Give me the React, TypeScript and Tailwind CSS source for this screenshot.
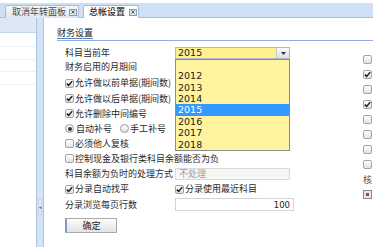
import React from "react";

const CB = ({ checked }: { checked?: boolean }) => (
  <span className="inline-flex w-[9px] h-[9px] shrink-0 items-center justify-center rounded-[2px] border border-[#a3a3a3] bg-linear-to-b from-white to-[#e2e2e2]">
    {checked && (
      <svg width="7" height="7" viewBox="0 0 7 7">
        <path d="M0.8 3.6 L2.7 5.4 L6.2 1.1" stroke="#1e1e1e" strokeWidth="1.5" fill="none" />
      </svg>
    )}
  </span>
);

const Radio = ({ checked }: { checked?: boolean }) => (
  <span className="inline-flex w-[9px] h-[9px] shrink-0 items-center justify-center rounded-full border border-[#9a9a9a] bg-linear-to-b from-white to-[#e2e2e2]">
    {checked && <span className="w-[4px] h-[4px] rounded-full bg-[#333]" />}
  </span>
);

const Close = () => (
  <span className="inline-flex w-[8px] h-[7px] shrink-0 items-center justify-center border border-[#8e9aab] bg-[#dfe5ee]">
    <svg width="4" height="4" viewBox="0 0 4 4" className="block">
      <path d="M0.5 0.5 L3.5 3.5 M3.5 0.5 L0.5 3.5" stroke="#4f5b6d" strokeWidth="1" />
    </svg>
  </span>
);

export default function App() {
  const years = ["", "2012", "2013", "2014", "2015", "2016", "2017", "2018"];
  return (
    <div className="relative w-[373px] h-[247px] overflow-hidden bg-white flex flex-col text-[#2a2a2a] text-[9px] leading-[12px] font-['DejaVu_Sans','Noto_Sans_CJK_SC',sans-serif]">
      {/* tab strip */}
      <div className="h-[18px] shrink-0 pt-[3px]">
        <div className="h-[15px] bg-[#cfdff4] border-b border-[#a6c1e6] flex items-end pl-[5px] gap-[4px]">
          <div className="h-[13px] -mb-px w-[74px] shrink-0 flex items-center gap-[3px] pl-[6px] whitespace-nowrap border border-[#aabbd3] border-b-0 rounded-t-[2px] bg-linear-to-b from-[#f4f7fb] to-[#dde6f2] text-[#4a4a4a] font-['Noto_Sans_CJK_SC',sans-serif]">
            <span>取消年转面板</span>
            <Close />
          </div>
          <div className="h-[13px] -mb-px w-[56px] shrink-0 flex items-center gap-[4px] pl-[5px] whitespace-nowrap border border-[#99bbe8] border-b-0 rounded-t-[2px] bg-white text-[#1a1a1a] font-['Noto_Sans_CJK_SC',sans-serif] font-medium">
            <span>总帐设置</span>
            <Close />
          </div>
        </div>
      </div>

      {/* body */}
      <div className="flex flex-1 min-h-0">
        {/* left panel */}
        <div className="w-[37px] shrink-0 border-r border-[#a9c3e6] flex flex-col">
          <div className="h-[15px] bg-[#dde8f6] border-b border-[#c3d5ec]" />
          <div className="h-[14px] border-b border-[#edf1f6]" />
          <div className="h-[13px] border-b border-[#edf1f6]" />
          <div className="h-[12px] border-b border-[#edf1f6]" />
          <div className="h-[13px] border-b border-[#f2f4f8]" />
        </div>
        {/* splitter */}
        <div className="w-[7px] shrink-0 bg-[#d4e3f5] border-r border-[#a9c3e6] flex flex-col items-center pt-[181px]">
          <div className="w-[4px] h-[16px] bg-[#e6edf5] border border-[#c2cfdf] flex items-center justify-center text-[5px] leading-[5px] text-[#666]">
            ◂
          </div>
        </div>

        {/* content */}
        <div className="flex-1 flex flex-col min-w-0 font-['Noto_Sans_CJK_SC',sans-serif]">
          <div className="ml-[13px] h-[23px] flex items-end pb-[1px] border-b border-[#8fb0e0] text-[#222]">
            <span className="border-b border-[#5c86c7] leading-[11px]">财务设置</span>
          </div>
          <div className="flex">
            {/* form column */}
            <div className="w-[319px] shrink-0 pl-[21px] pt-[6px] flex flex-col">
              <div className="h-[12px] flex items-center">
                <span className="w-[110px]">科目当前年</span>
                <div className="w-[115px] h-[12px] flex items-center border border-[#b5b8c8] bg-[#fff08f]">
                  <span className="flex-1 pl-[2px] font-['DejaVu_Sans',sans-serif] text-[9.5px] text-[#222]">2015</span>
                  <span className="w-[13px] h-full border-l border-[#c8c8c8] bg-linear-to-b from-[#fafafa] to-[#dedede] flex items-center justify-center">
                    <svg width="5" height="3" viewBox="0 0 5 3">
                      <path d="M0 0 H5 L2.5 3 Z" fill="#333" />
                    </svg>
                  </span>
                </div>
              </div>
              <div className="h-[16px] flex items-center">财务启用的月期间</div>
              <div className="h-[16px] flex items-center gap-[1px]">
                <CB checked />
                <span>允许做以前单据(期间数)</span>
              </div>
              <div className="h-[15px] flex items-center gap-[1px]">
                <CB checked />
                <span>允许做以后单据(期间数)</span>
              </div>
              <div className="h-[15px] flex items-center gap-[1px]">
                <CB checked />
                <span>允许删除中间编号</span>
              </div>
              <div className="h-[15px] flex items-center">
                <Radio checked />
                <span className="ml-[2px] w-[44px]">自动补号</span>
                <Radio />
                <span className="ml-[1px]">手工补号</span>
              </div>
              <div className="h-[15px] flex items-center gap-[1px]">
                <CB />
                <span>必须他人复核</span>
              </div>
              <div className="h-[15px] flex items-center gap-[1px]">
                <CB />
                <span>控制现金及银行类科目余额能否为负</span>
              </div>
              <div className="h-[16px] flex items-center">
                <span className="w-[110px]">科目余额为负时的处理方式</span>
                <div className="w-[115px] h-[12px] flex items-center pl-[3px] border border-[#dadada] bg-[#f6f6f6] text-[#a0a0a0]">
                  不处理
                </div>
              </div>
              <div className="h-[14px] flex items-center">
                <div className="w-[110px] flex items-center gap-[1px]">
                  <CB checked />
                  <span>分录自动找平</span>
                </div>
                <CB checked />
                <span className="ml-[1px]">分录使用最近科目</span>
              </div>
              <div className="h-[17px] flex items-center">
                <span className="w-[110px]">分录浏览每页行数</span>
                <div className="w-[119px] h-[13px] flex items-center justify-end pr-[3px] border border-[#d4d4d4] bg-white font-['DejaVu_Sans',sans-serif] text-[8.5px] text-[#222]">
                  100
                </div>
              </div>
              <div className="mt-[5px]">
                <button className="w-[52px] h-[15px] flex items-center justify-center border border-[#a9a9a9] border-l-[2px] border-l-[#7f9cc6] rounded-[1px] bg-linear-to-b from-[#fdfdfd] to-[#e3e3e3] text-[#222] text-[9px] leading-[12px]">
                  确定
                </button>
              </div>
            </div>
            {/* right column (partially visible) */}
            <div className="pt-[11px] flex flex-col">
              <div className="h-[15px] flex items-center"><CB /></div>
              <div className="h-[15px] flex items-center"><CB checked /></div>
              <div className="h-[15px] flex items-center"><CB /></div>
              <div className="h-[15px] flex items-center"><CB checked /></div>
              <div className="h-[15px] flex items-center"><CB /></div>
              <div className="h-[15px] flex items-center"><CB /></div>
              <div className="h-[15px] flex items-center"><CB /></div>
              <div className="h-[15px] flex items-center"><CB /></div>
              <div className="h-[15px] flex items-center text-[#555]">核</div>
              <div className="h-[15px] flex items-center">
                <span className="w-[9px] h-[9px] border border-[#8a8a8a] bg-[#e8e8e8] flex items-center justify-center">
                  <span className="w-[3px] h-[3px] bg-[#b04040]" />
                </span>
              </div>
            </div>
          </div>
        </div>
      </div>

      {/* dropdown list overlay */}
      <div className="absolute left-[175px] top-[59px] w-[115px] h-[92px] border border-[#8c8c8c] bg-[#fff3a0] flex flex-col font-['DejaVu_Sans',sans-serif] text-[9.5px] leading-[11.4px]">
        {years.map((y, i) => (
          <div
            key={i}
            className={
              y === "2015"
                ? "h-[11.4px] pl-[2px] bg-[#3399ff] text-white"
                : "h-[11.4px] pl-[2px] text-[#222]"
            }
          >
            {y}
          </div>
        ))}
      </div>
    </div>
  );
}
